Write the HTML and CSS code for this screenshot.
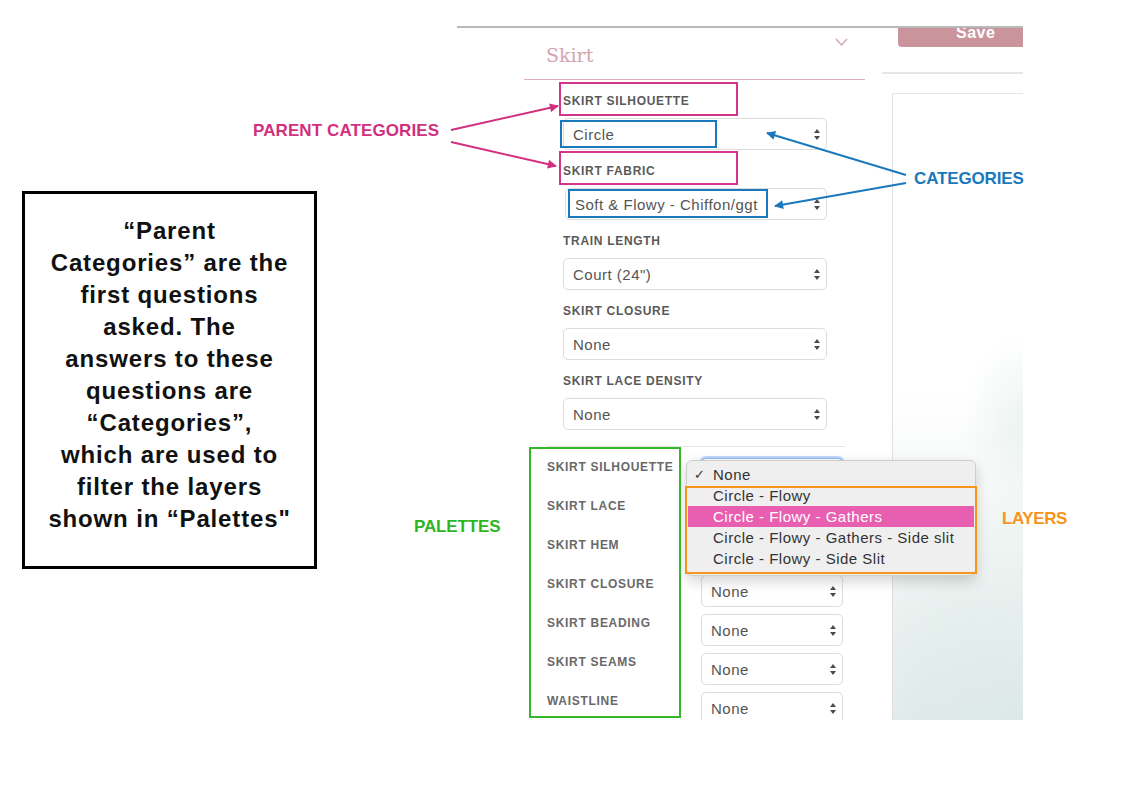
FILE: index.html
```html
<!DOCTYPE html>
<html>
<head>
<meta charset="utf-8">
<title>Skirt categories</title>
<link rel="stylesheet" href="styles.css">
</head>
<body>
<div class="canvas">
  <div class="note">“Parent<br>Categories” are the<br>first questions<br>asked. The<br>answers to these<br>questions are<br>“Categories”,<br>which are used to<br>filter the layers<br>shown in “Palettes"</div>

  <div class="shot">
    <div class="form-col">
      <div class="panel-head">
        <span class="panel-title">Skirt</span>
        <svg class="chev" viewBox="0 0 13 8"><path d="M1 1 L6.5 7 L12 1" fill="none" stroke="#d6a6b0" stroke-width="1.4"/></svg>
      </div>
      <div class="fields">
        <div class="field">
          <div class="field-label">Skirt Silhouette</div>
          <div class="select"><span>Circle</span><span class="arr"></span></div>
        </div>
        <div class="field">
          <div class="field-label">Skirt Fabric</div>
          <div class="select shifted"><span>Soft &amp; Flowy - Chiffon/ggt</span><span class="arr"></span></div>
        </div>
        <div class="field">
          <div class="field-label">Train Length</div>
          <div class="select"><span>Court (24")</span><span class="arr"></span></div>
        </div>
        <div class="field">
          <div class="field-label">Skirt Closure</div>
          <div class="select"><span>None</span><span class="arr"></span></div>
        </div>
        <div class="field">
          <div class="field-label">Skirt Lace Density</div>
          <div class="select"><span>None</span><span class="arr"></span></div>
        </div>
      </div>
      <div class="palettes">
        <div class="prow"><div class="field-label">Skirt Silhouette</div><div class="select focus under"></div></div>
        <div class="prow"><div class="field-label">Skirt Lace</div><div class="select under"></div></div>
        <div class="prow"><div class="field-label">Skirt Hem</div><div class="select under"></div></div>
        <div class="prow"><div class="field-label">Skirt Closure</div><div class="select"><span>None</span><span class="arr"></span></div></div>
        <div class="prow"><div class="field-label">Skirt Beading</div><div class="select"><span>None</span><span class="arr"></span></div></div>
        <div class="prow"><div class="field-label">Skirt Seams</div><div class="select"><span>None</span><span class="arr"></span></div></div>
        <div class="prow"><div class="field-label">Waistline</div><div class="select"><span>None</span><span class="arr"></span></div></div>
      </div>
    </div>
    <div class="side-col">
      <div class="save"><span>Save</span></div>
      <div class="side-line"></div>
      <div class="preview"></div>
    </div>

    <div class="menu">
      <div class="menu-item checked">None</div>
      <div class="menu-item">Circle - Flowy</div>
      <div class="menu-item hl">Circle - Flowy - Gathers</div>
      <div class="menu-item">Circle - Flowy - Gathers - Side slit</div>
      <div class="menu-item">Circle - Flowy - Side Slit</div>
    </div>
  </div>

  <svg class="overlay" viewBox="0 0 1125 789" width="1125" height="789">
    <defs>
      <marker id="mp" viewBox="0 0 10 10" refX="9" refY="5" markerWidth="5" markerHeight="4.5" orient="auto"><path d="M0,0 L10,5 L0,10 z" fill="#d3307f"/></marker>
      <marker id="mb" viewBox="0 0 10 10" refX="9" refY="5" markerWidth="5" markerHeight="4.5" orient="auto"><path d="M0,0 L10,5 L0,10 z" fill="#1a78bd"/></marker>
    </defs>
    <g fill="none" stroke-width="2">
      <rect x="560" y="83" width="177" height="32" stroke="#d6338a"/>
      <rect x="560" y="152" width="177" height="32" stroke="#d6338a"/>
      <rect x="561" y="121" width="155" height="26" stroke="#1a78bd"/>
      <rect x="569" y="190" width="198" height="27" stroke="#1a78bd"/>
      <rect x="530" y="448" width="150" height="269" stroke="#34b82a"/>
      <rect x="686" y="487" width="290" height="86" stroke="#f7941d"/>
      <line x1="451" y1="130" x2="558" y2="106" stroke="#d3307f" marker-end="url(#mp)"/>
      <line x1="451" y1="142" x2="556" y2="166" stroke="#d3307f" marker-end="url(#mp)"/>
      <line x1="906" y1="175" x2="767" y2="133" stroke="#1a78bd" marker-end="url(#mb)"/>
      <line x1="906" y1="183" x2="775" y2="206" stroke="#1a78bd" marker-end="url(#mb)"/>
    </g>
  </svg>

  <div class="anno anno-parent">PARENT CATEGORIES</div>
  <div class="anno anno-cat">CATEGORIES</div>
  <div class="anno anno-pal">PALETTES</div>
  <div class="anno anno-lay">LAYERS</div>
</div>
</body>
</html>
```
FILE: styles.css
```css
* { box-sizing: border-box; }
html, body { margin: 0; padding: 0; background: #fff; }
body { font-family: "Liberation Sans", Arial, sans-serif; }

.canvas { position: relative; width: 1125px; height: 789px; overflow: hidden; background: #fff; }

/* explanatory note */
.note {
  position: absolute; left: 22px; top: 191px; width: 295px; height: 378px;
  border: 3px solid #000; background: #fff;
  text-align: center; font-weight: bold; font-size: 24px; line-height: 32px;
  letter-spacing: 0.85px; padding-top: 21px; color: #111;
}

/* screenshot crop */
.shot {
  position: absolute; left: 457px; top: 26px; width: 566px; height: 694px;
  border-top: 2px solid #b9b9b9; background: #fff; display: flex; overflow: hidden;
}
.form-col { width: 425px; flex: none; display: flex; flex-direction: column; }

.panel-head {
  margin-left: 67px; width: 341px; height: 52px; flex: none;
  border-bottom: 1px solid #deb0b9;
  display: flex; justify-content: space-between; align-items: flex-start;
  padding: 0 17px 0 22px;
}
.panel-title { font-family: "DejaVu Serif", Georgia, serif; font-size: 19px; line-height: 24px; margin-top: 15px; color: #d5a3ad; }
.chev { width: 13px; height: 8px; margin-top: 10px; }

.fields { margin-left: 106px; width: 264px; padding-top: 14px; display: flex; flex-direction: column; gap: 14px; }
.field-label {
  font-size: 12px; line-height: 14px; font-weight: bold; letter-spacing: 0.7px;
  text-transform: uppercase; color: #5a5a5a; white-space: nowrap;
}
.select {
  margin-top: 10px; height: 32px; border: 1px solid #dcdcdc; border-radius: 5px; background: #fff;
  display: flex; align-items: center; justify-content: space-between;
  padding: 0 6px 0 9px; font-size: 15px; letter-spacing: 0.5px; color: #555;
}
.select.shifted { margin-left: 2px; }
.arr { position: relative; width: 6px; height: 11px; flex: none; }
.arr::before, .arr::after {
  content: ""; position: absolute; left: 0; width: 0; height: 0;
  border-left: 3px solid transparent; border-right: 3px solid transparent;
}
.arr::before { top: 0; border-bottom: 4px solid #4a4a4a; }
.arr::after { bottom: 0; border-top: 4px solid #4a4a4a; }

.palettes {
  margin-left: 90px; width: 298px; margin-top: 16px; border-top: 1px solid #e6e6e6;
  padding-top: 11px; display: flex; flex-direction: column; gap: 7px;
}
.prow { display: flex; height: 32px; flex: none; }
.prow .field-label { width: 154px; padding-top: 2px; color: #696969; }
.prow .select { margin-top: 0; width: 142px; }
.select.focus { border-color: #8dbaf0; box-shadow: 0 0 0 2px rgba(110, 165, 240, 0.45); }

/* right column */
.side-col { flex: 1; display: flex; flex-direction: column; }
.save {
  margin-left: 16px; height: 19px; flex: none; background: #c9949c;
  border-radius: 0 0 0 4px; overflow: hidden; padding-left: 58px;
  color: #fff; font-weight: bold; font-size: 16px; letter-spacing: 0.5px;
}
.save span { display: block; line-height: 16px; margin-top: -3px; }
.side-line { margin-top: 25px; height: 2px; background: #e6e6e6; flex: none; }
.preview {
  margin-left: 10px; margin-top: 19px; flex: 1;
  border-left: 1px solid #e0e0e0; border-top: 1px solid #e6e6e6;
  background:
    radial-gradient(ellipse 150px 240px at 100% 100%, rgba(205, 224, 221, 0.45), rgba(205, 224, 221, 0) 100%),
    radial-gradient(ellipse 110px 180px at 20% 100%, rgba(214, 230, 227, 0.4), rgba(214, 230, 227, 0) 100%),
    radial-gradient(ellipse 60px 90px at 100% 330px, rgba(225, 236, 234, 0.6), rgba(225, 236, 234, 0) 100%),
    linear-gradient(to bottom, #fff 0, #fff 300px, #f3f7f6 430px, #e9f0ef 100%);
}

/* native popup menu */
.menu {
  position: absolute; left: 229px; top: 432px; width: 290px;
  padding: 3px 0 6px; background: #efefef; border: 1px solid #cdcdcd; border-radius: 6px;
  box-shadow: 0 5px 14px rgba(0, 0, 0, 0.18);
  font-size: 15px; letter-spacing: 0.5px; color: #333;
}
.menu-item { position: relative; height: 21px; line-height: 21px; padding-left: 25px; margin: 0 1px; white-space: nowrap; }
.menu-item.checked::before { content: "✓"; position: absolute; left: 6px; font-family: "DejaVu Sans", sans-serif; font-size: 13px; }
.menu-item.hl { background: #e85fb1; color: #fff; }

/* annotations */
.overlay { position: absolute; left: 0; top: 0; pointer-events: none; }
.anno { position: absolute; font-weight: bold; font-size: 17px; line-height: 18px; letter-spacing: -0.15px; white-space: nowrap; }
.anno-parent { left: 253px; top: 122px; color: #d0307e; letter-spacing: 0.1px; }
.anno-cat { left: 914px; top: 170px; color: #1a78bd; }
.anno-pal { left: 414px; top: 518px; color: #2eb523; }
.anno-lay { left: 1002px; top: 510px; color: #f7941d; letter-spacing: -0.4px; }
```
